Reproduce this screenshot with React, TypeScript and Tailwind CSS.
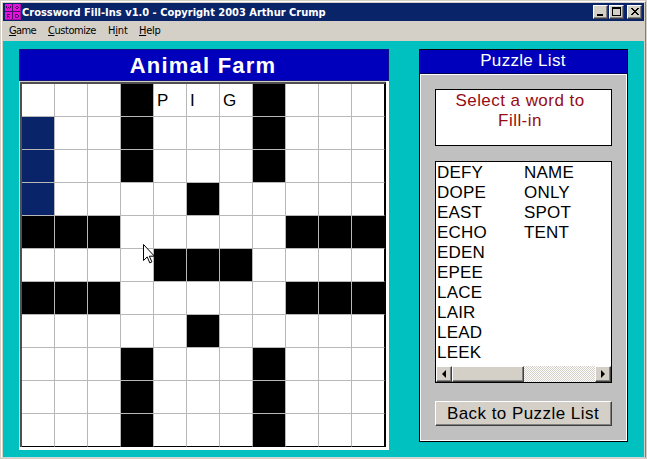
import type { ReactNode } from "react";
import clsx from "clsx";

// # = blocked square, s = selected square, letters are filled in
const GRID = [
    "...#PIG#...",
    "s..#...#...",
    "s..#...#...",
    "s....#.....",
    "###.....###",
    "....###....",
    "###.....###",
    ".....#.....",
    "...#...#...",
    "...#...#...",
    "...#...#...",
];

const WORDS = [
    ["DEFY", "DOPE", "EAST", "ECHO", "EDEN", "EPEE", "LACE", "LAIR", "LEAD", "LEEK"],
    ["NAME", "ONLY", "SPOT", "TENT"],
];

const raised = "border border-t-white border-l-white border-r-[#404040] border-b-[#404040] bg-[#d4d0c8] shadow-[inset_-1px_-1px_0_#808080]";

function AppIcon() {
    return (
        <svg width="16" height="16" viewBox="0 0 16 16" shapeRendering="crispEdges" className="shrink-0">
            <rect width="16" height="16" fill="#e414dc" />
            <path d="M0 7.5H16M7.5 0V16" stroke="#4c1068" />
            <path d="M0 15.5H16M15.5 0V16" stroke="#a010a0" />
            <g fill="#4c0860">
                <path d="M1 2h1v2H1zM2 4h1v1H2zM3 3h1v1H3zM4 4h1v1H4zM5 2h1v2H5z" />
                <path d="M11 2h2v1h-2zM10 3h1v1h-1zM13 3h1v1h-1zM11 4h2v1h-2z" />
                <path d="M2 10h3v1H3v1h1v1h1v1H4v-1H3v1H2z" />
                <path d="M10 10h3v1h-2v2h2v1h-3zM13 11h1v2h-1z" />
            </g>
        </svg>
    );
}

function WinButton({ children, className }: { children: ReactNode; className?: string }) {
    return (
        <button className={clsx("w-[15px] h-[14px] flex items-center justify-center", raised, className)}>
            <svg width="13" height="12" viewBox="0 0 13 12" shapeRendering="crispEdges" className="shrink-0">
                {children}
            </svg>
        </button>
    );
}

function MenuItem({ before = "", hot, after, className }: { before?: string; hot: string; after: string; className: string }) {
    return (
        <button className={clsx("text-left whitespace-nowrap", className)}>
            {before}
            <span className="underline underline-offset-1">{hot}</span>
            {after}
        </button>
    );
}

function ScrollArrow({ d }: { d: string }) {
    return (
        <button className={clsx("w-4 h-4 flex items-center justify-center", raised)}>
            <svg width="8" height="8" viewBox="0 0 8 8" className="shrink-0">
                <path d={d} fill="#000" />
            </svg>
        </button>
    );
}

function Board() {
    return (
        <section className="w-[370px] h-[401px] flex flex-col bg-white">
            <h1 className="h-8 bg-[#0000bc] border border-[#101080] text-white text-center text-[22px] leading-[31px] font-bold tracking-[1.2px] pr-[2px]">
                Animal Farm
            </h1>
            <div className="w-[369px] h-[368px] bg-[#d4d0c8] border-r-2 border-b-2 border-white pt-px pl-px">
                <div className="w-[366px] h-[365px] border-l-2 border-t-2 border-r border-l-[#505050] border-t-[#505050] border-r-black">
                    <div className="grid grid-cols-[repeat(11,33px)] auto-rows-[33px] border-b border-black bg-white h-[363px]">
                        {GRID.flatMap((row, r) =>
                            row.split("").map((c, i) => (
                                <div
                                    key={`${r}-${i}`}
                                    className={clsx(
                                        "h-[33px] border-r border-b pl-[3px] text-[17px] leading-[33px]",
                                        i === 10 ? "border-r-black" : "border-r-[#b8b8b8]",
                                        r === 10 ? "border-b-black" : "border-b-[#b8b8b8]",
                                        c === "#" && "bg-black",
                                        c === "s" && "bg-[#0a246a]",
                                    )}
                                >
                                    {/[A-Z]/.test(c) ? c : ""}
                                </div>
                            )),
                        )}
                    </div>
                </div>
            </div>
        </section>
    );
}

function PuzzlePanel() {
    return (
        <section className="w-[209px] h-[393px] flex flex-col border border-black bg-[#c0c0c0]">
            <h2 className="h-6 bg-[#0000bc] border-b border-[#000050] text-white text-center text-[17px] leading-[22px] tracking-[0.3px] pr-px">
                Puzzle List
            </h2>
            <div className="flex-1 flex flex-col border border-white px-[14px] pt-[14px]">
                <div className="w-[177px] h-[57px] border border-black bg-white text-[#960c14] text-center text-[17px] leading-5 tracking-[0.45px] pt-px pr-[7px]">
                    Select a word to
                    <br />
                    Fill-in
                </div>
                <div className="mt-[15px] w-[177px] h-[222px] flex flex-col border border-black bg-white">
                    <div className="flex-1 flex pt-px pl-px text-[17px] leading-5">
                        {WORDS.map((col, i) => (
                            <ul key={i} className="w-[88px] tracking-[0.2px]">
                                {col.map((w) => (
                                    <li key={w}>{w}</li>
                                ))}
                            </ul>
                        ))}
                    </div>
                    <div className="h-4 flex bg-[#e8e6e2]">
                        <ScrollArrow d="M6 0v8L2 4z" />
                        <div className={clsx("w-[72px] h-4", raised)} />
                        <div className="flex-1 bg-[repeating-conic-gradient(#ffffff_0_25%,#d4d0c8_0_50%)] bg-[length:2px_2px]" />
                        <ScrollArrow d="M2 0v8l4-4z" />
                    </div>
                </div>
                <button className={clsx("mt-[18px] w-[177px] h-[25px] pr-px text-[17px] leading-[23px] tracking-[0.45px] whitespace-nowrap", raised)}>
                    Back to Puzzle List
                </button>
            </div>
        </section>
    );
}

export default function App() {
    return (
        <div className="relative w-[647px] h-[459px] overflow-hidden border border-[#d4d0c8] bg-[#d4d0c8] font-['Liberation_Sans',sans-serif] text-black">
            <div className="h-[457px] flex flex-col border border-white border-r-[#808080] border-b-[#c8d8d8] px-px pt-px">
                <header className="h-[18px] flex items-center bg-[#0a246a] pl-[2px] pr-[2px] text-white">
                    <AppIcon />
                    <span className="flex-1 pl-px text-[11px] leading-[18px] pt-px font-bold font-['DejaVu_Sans_Condensed','DejaVu_Sans',sans-serif] whitespace-nowrap">
                        Crossword Fill-Ins v1.0 - Copyright 2003 Arthur Crump
                    </span>
                    <WinButton>
                        <path d="M3 8h6v2H3z" />
                    </WinButton>
                    <WinButton className="ml-px">
                        <path d="M2 1h9v9H2zM3 3v6h7V3z" fillRule="evenodd" />
                    </WinButton>
                    <WinButton className="ml-[3px]">
                        <path d="M3 2h2v1H3zM9 2h2v1H9zM4 3h2v1H4zM8 3h2v1H8zM5 4h4v1H5zM6 5h2v1H6zM5 6h4v1H5zM4 7h2v1H4zM8 7h2v1H8zM3 8h2v1H3zM9 8h2v1H9z" />
                    </WinButton>
                </header>
                <nav className="h-5 flex items-center pl-[6px] pt-px text-[11px] font-['DejaVu_Sans_Condensed','DejaVu_Sans',sans-serif]">
                    <MenuItem className="w-[39px] tracking-[-0.6px]" hot="G" after="ame" />
                    <MenuItem className="w-[60px] tracking-[-0.45px]" hot="C" after="ustomize" />
                    <MenuItem className="w-[31px] tracking-[-0.2px]" before="H" hot="i" after="nt" />
                    <MenuItem className="w-[30px] tracking-[-0.3px]" hot="H" after="elp" />
                </nav>
                <main className="flex-1 flex items-start bg-[#00c0c0] pt-2 pl-4 gap-[30px]">
                    <Board />
                    <PuzzlePanel />
                </main>
            </div>
            <svg width="12" height="21" viewBox="0 0 12 21" className="absolute left-[142px] top-[243px]">
                <path d="M.5.5v16l3.7-3.6 2.6 6 2.1-1-2.6-5.7h5.1z" fill="#fff" stroke="#000" />
            </svg>
        </div>
    );
}
